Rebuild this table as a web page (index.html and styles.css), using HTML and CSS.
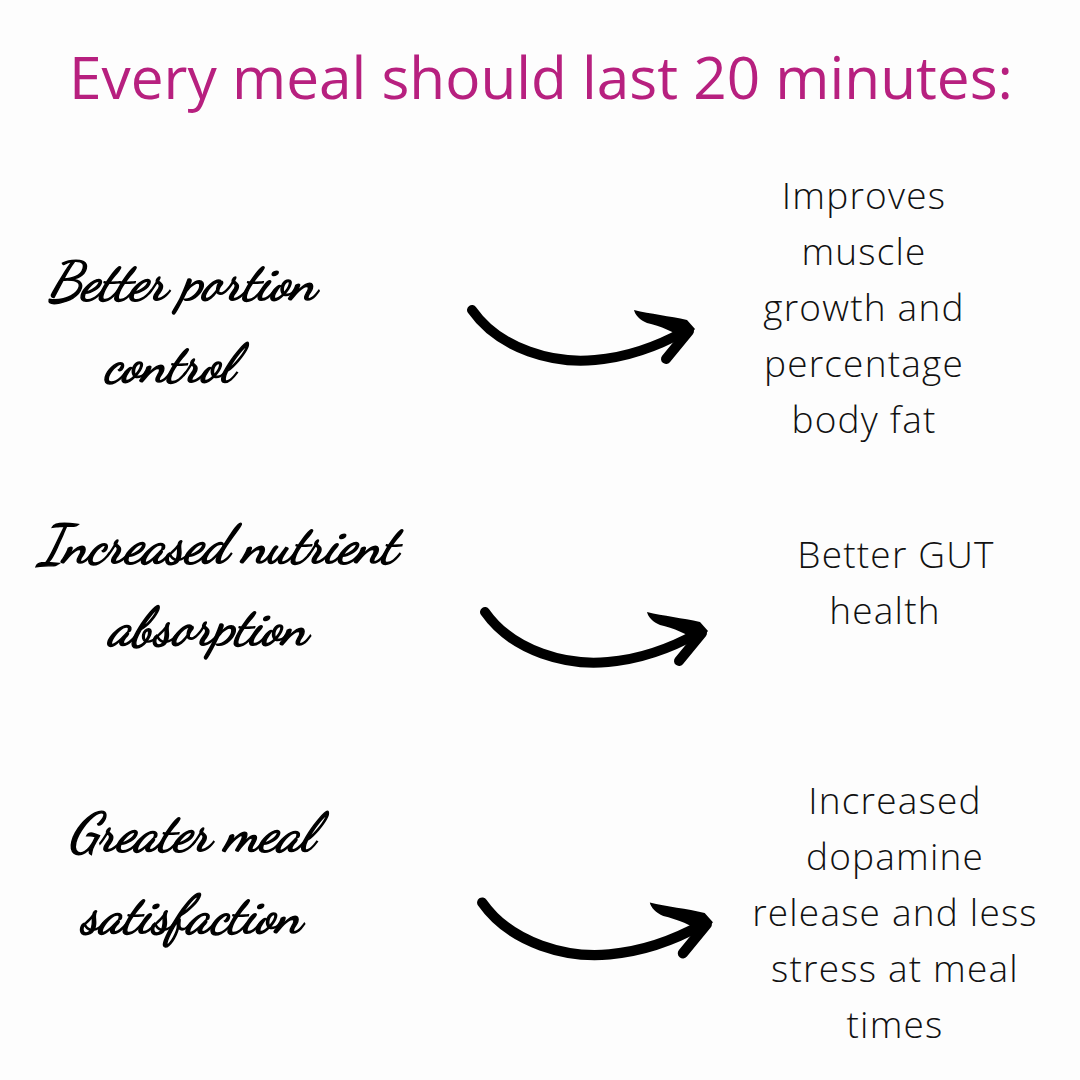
FILE: index.html
```html
<!DOCTYPE html>
<html lang="en">
<head>
<meta charset="utf-8">
<title>Every meal should last 20 minutes</title>
<link rel="stylesheet" href="styles.css">
</head>
<body>
<main class="page">
  <h1 class="title">Every meal should last 20 minutes:</h1>

  <section class="row row-1">
    <div class="cause"><span class="line">Better portion</span><span class="line line-2">control</span></div>
    <svg class="arrow" viewBox="0 0 232 72" aria-hidden="true">
      <path class="arrow-shaft" d="M7 10 C 35 50, 90 64, 130 60 C 165 57, 195 45, 220 31"/>
      <path class="arrow-barb" d="M169 10 C 185 14, 205 16, 222 20 L 230 29 L 221 40 C 210 32, 195 26, 182 23 C 175 20, 170 15, 169 10 Z"/>
      <path class="arrow-head" d="M224 31 L 201 59"/>
    </svg>
    <div class="effect">Improves<br>muscle<br>growth and<br>percentage<br>body fat</div>
  </section>

  <section class="row row-2">
    <div class="cause"><span class="line">Increased nutrient</span><span class="line line-2">absorption</span></div>
    <svg class="arrow" viewBox="0 0 232 72" aria-hidden="true">
      <path class="arrow-shaft" d="M7 10 C 35 50, 90 64, 130 60 C 165 57, 195 45, 220 31"/>
      <path class="arrow-barb" d="M169 10 C 185 14, 205 16, 222 20 L 230 29 L 221 40 C 210 32, 195 26, 182 23 C 175 20, 170 15, 169 10 Z"/>
      <path class="arrow-head" d="M224 31 L 201 59"/>
    </svg>
    <div class="effect"><span class="line line-gut">Better GUT</span><span class="line line-health">health</span></div>
  </section>

  <section class="row row-3">
    <div class="cause"><span class="line">Greater meal</span><span class="line line-2">satisfaction</span></div>
    <svg class="arrow" viewBox="0 0 232 72" aria-hidden="true">
      <path class="arrow-shaft" d="M7 10 C 35 50, 90 64, 130 60 C 165 57, 195 45, 220 31"/>
      <path class="arrow-barb" d="M169 10 C 185 14, 205 16, 222 20 L 230 29 L 221 40 C 210 32, 195 26, 182 23 C 175 20, 170 15, 169 10 Z"/>
      <path class="arrow-head" d="M224 31 L 201 59"/>
    </svg>
    <div class="effect">Increased<br>dopamine<br>release and less<br>stress at meal<br>times</div>
  </section>
</main>
</body>
</html>
```

FILE: styles.css
```css
html, body {
  margin: 0;
  padding: 0;
  background: #fdfdfd;
}

.page {
  width: 1080px;
  height: 1080px;
  overflow: hidden;
  box-sizing: border-box;
}

.title {
  margin: 0;
  padding-top: 41px;
  font-family: "Open Sans", "Liberation Sans", sans-serif;
  font-weight: 400;
  font-size: 58.5px;
  line-height: 70px;
  color: #b7207f;
  text-align: center;
  padding-left: 2px;
}

.row {
  display: flex;
  align-items: flex-start;
}

.line {
  display: block;
}

.cause {
  font-family: "Dancing Script", "Z003", "URW Chancery L", "Liberation Serif", serif;
  font-style: italic;
  font-size: 54px;
  line-height: 82px;
  color: #000;
  -webkit-text-stroke: 1.4px #000;
  text-align: center;
  flex: none;
}

.effect {
  font-family: "Open Sans", "Liberation Sans", sans-serif;
  font-weight: 300;
  font-size: 37px;
  letter-spacing: 1.2px;
  line-height: 56px;
  color: #111;
  text-align: center;
  width: 320px;
  flex: none;
}

.arrow {
  width: 232px;
  height: 72px;
  flex: none;
  overflow: visible;
}

.arrow-shaft {
  fill: none;
  stroke: #000;
  stroke-width: 10;
  stroke-linecap: round;
}

.arrow-barb {
  fill: #000;
}

.arrow-head {
  fill: none;
  stroke: #000;
  stroke-width: 10;
  stroke-linecap: round;
}

/* row 1 */
.row-1 { height: 349px; }
.row-1 .cause { width: 364px; margin-top: 130px; }
.row-1 .line-2 { padding-right: 26px; }
.row-1 .arrow { margin-left: 101px; margin-top: 189px; }
.row-1 .effect { margin-left: 7px; margin-top: 56px; }

/* row 2 */
.row-2 { height: 280px; }
.row-2 .cause { width: 436px; margin-top: 44px; }
.row-2 .line-2 { padding-right: 20px; }
.row-2 .arrow { margin-left: 42px; margin-top: 142px; }
.row-2 .effect { margin-left: 20px; margin-top: 66px; }
.row-2 .line-gut { padding-left: 12px; }
.row-2 .line-health { padding-right: 10px; }

/* row 3 */
.row-3 { height: 340px; }
.row-3 .cause { width: 382px; margin-top: 52px; }
.row-3 .arrow { margin-left: 93px; margin-top: 152px; width: 240px; height: 75px; }
.row-3 .effect { margin-left: 20px; margin-top: 32px; }
```
